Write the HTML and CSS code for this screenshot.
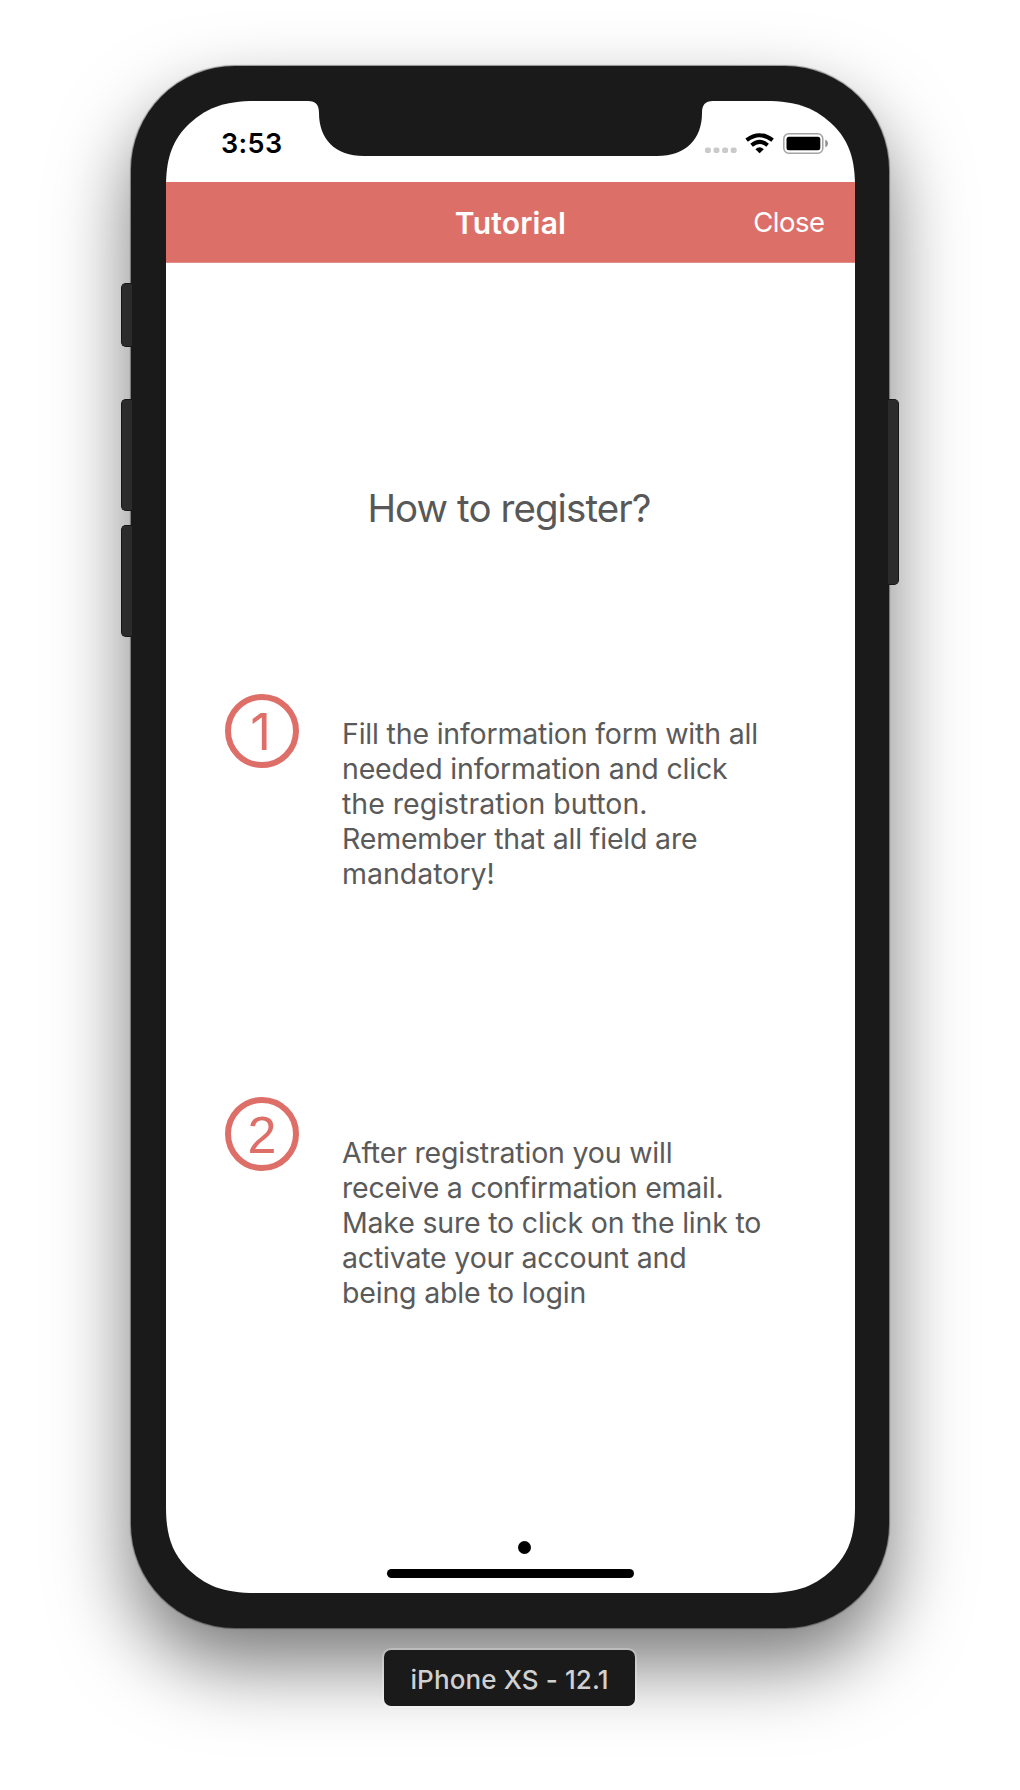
FILE: index.html
```html
<!DOCTYPE html>
<html lang="en">
<head>
<meta charset="utf-8">
<title>Tutorial</title>
<link rel="stylesheet" href="styles.css">
</head>
<body>
<main class="stage">
  <div class="phone">
    <i class="key key-mute"></i>
    <i class="key key-up"></i>
    <i class="key key-down"></i>
    <i class="key key-power"></i>
    <div class="screen">
      <header class="status">
        <span class="time">3:53</span>
        <svg class="notch" width="405" height="55" viewBox="0 0 405 55"><path d="M0 0C8 0 11 4 11 12C11 38 27 55 56 55H349C378 55 394 38 394 12C394 4 397 0 405 0Z" fill="#1a1a1a"/></svg>
        <svg class="signals" width="126" height="24" viewBox="0 0 126 24">
          <g fill="#cacaca"><rect x="2" y="15.500" width="5.800" height="5.600" rx="1.800"/><rect x="10.600" y="15.500" width="5.800" height="5.600" rx="1.800"/><rect x="19.200" y="15.500" width="5.800" height="5.600" rx="1.800"/><rect x="27.800" y="15.500" width="5.800" height="5.600" rx="1.800"/></g>
          <g fill="none" stroke="#000" stroke-width="4"><path d="M43.600 8.200Q56.600 -1.800 69.600 8.200"/><path d="M48.600 13.200Q56.600 6.600 64.600 13.200"/></g>
          <path d="M56.600 21.300L52.400 17.200Q56.600 13.500 60.800 17.200Z"/>
          <rect x="80.800" y="1.700" width="39" height="19.500" rx="5" fill="none" stroke="#a3a3a3" stroke-width="1.500"/>
          <rect x="83.500" y="4.700" width="33.800" height="13.500" rx="2.500"/>
          <path d="M122.300 7.500Q125 8.500 125 11.400T122.300 15.200Z" fill="#8f8f8f"/>
        </svg>
      </header>
      <nav class="nav">
        <span class="nav-title">Tutorial</span>
        <span class="close">Close</span>
      </nav>
      <h1 class="title">How to register?</h1>
      <section class="step">
        <div class="badge badge-one">1</div>
        <p class="copy"><span>Fill the information form with all</span><span>needed information and click</span><span class="loose">the registration button.</span><span>Remember that all field are</span><span class="loose">mandatory!</span></p>
      </section>
      <section class="step step-second">
        <div class="badge">2</div>
        <p class="copy"><span>After registration you will</span><span class="tight">receive a confirmation email.</span><span>Make sure to click on the link to</span><span>activate your account and</span><span>being able to login</span></p>
      </section>
      <div class="page-dot"></div>
      <div class="home-bar"></div>
    </div>
  </div>
  <div class="device">iPhone XS - 12.1</div>
</main>
</body>
</html>
```
FILE: styles.css
```css
* { box-sizing: border-box; }
body { margin: 0; background: #fff; font-family: Inter, "Liberation Sans", sans-serif; }
.stage { width: 1020px; height: 1790px; padding: 66px 0 0 131px; overflow: hidden; }
.phone {
  position: relative; width: 758px; height: 1562px; padding: 35px 34px 35px 35px;
  border-radius: 104px; background: #1a1a1a;
  box-shadow: 0 0 1px 1px rgba(0,0,0,.38), 0 37px 78px rgba(0,0,0,.53);
}
.key { position: absolute; left: -10px; width: 11px; background: #2b2b2b; border: 1px solid #161616; border-right: 0; border-radius: 5px 0 0 5px; }
.key-mute { top: 217px; height: 64px; }
.key-up { top: 333px; height: 112px; }
.key-down { top: 459px; height: 112px; }
.key-power { top: 333px; left: auto; right: -10px; height: 186px; transform: scaleX(-1); }
.screen {
  width: 689px; height: 1492px; display: flex; flex-direction: column; background: #fff;
  clip-path: path("M0 86C0 60 5 42 20 26C39 7 57 0 90 0H599C632 0 650 7 669 26C684 42 689 60 689 86V1406C689 1432 684 1450 669 1466C650 1485 632 1492 599 1492H90C57 1492 39 1485 20 1466C5 1450 0 1432 0 1406Z");
}
.status { height: 81px; flex: none; display: flex; align-items: flex-start; }
.time { width: 142px; padding-left: 55px; margin-top: 26px; font-size: 27px; line-height: 33px; font-weight: 600; letter-spacing: .4px; }
.signals { margin: 31px 0 0 -10px; }
.nav { flex: none; display: grid; grid-template-columns: 1fr auto 1fr; align-items: center; height: 81px; background: #dd6f69; border-bottom: 1px solid #e38d88; color: #fff; }
.nav-title { grid-column: 2; padding-top: 2px; font-size: 30px; font-weight: 600; line-height: 36px; letter-spacing: .2px; }
.close { justify-self: end; padding-right: 30.500px; font-size: 27.500px; line-height: 34px; letter-spacing: -.5px; }
.title { margin: 221px 0 0; padding-right: 3px; font-size: 38.500px; line-height: 48px; font-weight: 400; letter-spacing: -.92px; text-align: center; color: #585858; }
.step { display: flex; height: 218px; margin: 162px 0 0 59px; color: #5a5a5a; }
.step-second { margin-top: 185px; }
.badge { flex: none; width: 74px; height: 74px; border: 6px solid #de6e68; border-radius: 50%; color: #de6e68; text-align: center; font: 52px/64px "Liberation Sans", Arial, sans-serif; }
.badge-one { padding-right: 3px; font: 51px/63px Inter, sans-serif; }
.copy { margin: 22px 0 0 43px; font-size: 28.500px; line-height: 35.100px; letter-spacing: -.19px; white-space: nowrap; }
.copy span { display: block; }
.copy .loose { letter-spacing: 0; }
.copy .tight { letter-spacing: -.24px; }
.step-second .copy { margin-top: 38px; }
.page-dot { width: 13px; height: 13px; margin: 226px 0 0 352px; border-radius: 50%; background: #000; }
.home-bar { width: 247px; height: 9px; margin: 15px 0 0 221px; border-radius: 5px; background: #000; }
.device { position: relative; width: 251px; height: 56px; margin: 22px 0 0 253px; border-radius: 7px; background: #1a1a1a; box-shadow: 0 0 0 2px rgba(255,255,255,.25); color: #d0d0d0; font-size: 26px; font-weight: 500; line-height: 59px; letter-spacing: .12px; text-align: center; }
```
